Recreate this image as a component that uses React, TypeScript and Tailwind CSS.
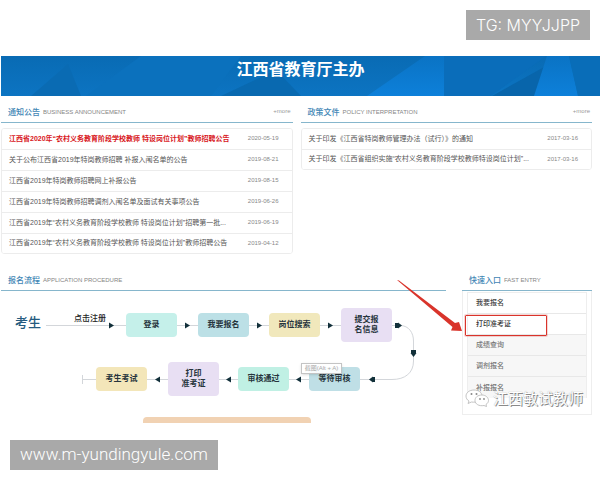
import React from 'react';

const notices = [
  { title: '江西省2020年“农村义务教育阶段学校教师 特设岗位计划”教师招聘公告', date: '2020-05-19', hot: true },
  { title: '关于公布江西省2019年特岗教师招聘 补报入闱名单的公告', date: '2019-08-21' },
  { title: '江西省2019年特岗教师招聘网上补报公告', date: '2019-08-15' },
  { title: '江西省2019年特岗教师招聘调剂入闱名单及面试有关事项公告', date: '2019-06-26' },
  { title: '江西省2019年“农村义务教育阶段学校教师 特设岗位计划”招聘第一批...', date: '2019-06-19' },
  { title: '江西省2019年“农村义务教育阶段学校教师 特设岗位计划”教师招聘公告', date: '2019-04-12' },
];

const policies = [
  { title: '关于印发《江西省特岗教师管理办法（试行）》的通知', date: '2017-03-16' },
  { title: '关于印发《江西省组织实施“农村义务教育阶段学校教师特设岗位计划”...', date: '2017-03-16' },
];

const steps = [
  { lines: ['登录'], place: 'left-[125px] top-[22px] h-6 bg-[#c5f0ea]' },
  { lines: ['我要报名'], place: 'left-[197px] top-[22px] h-6 bg-[#bce0e6]' },
  { lines: ['岗位搜索'], place: 'left-[268px] top-[22px] h-6 bg-[#f1e8bc]' },
  { lines: ['提交报', '名信息'], place: 'left-[340px] top-[17px] h-[34px] bg-[#e8dff3]' },
  { lines: ['等待审核'], place: 'left-[308px] top-[76px] h-6 bg-[#bfdfe6]' },
  { lines: ['审核通过'], place: 'left-[237px] top-[76px] h-6 bg-[#c0f0e4]' },
  { lines: ['打印', '准考证'], place: 'left-[167px] top-[71px] h-[34px] bg-[#e8dff3]' },
  { lines: ['考生考试'], place: 'left-[95px] top-[76px] h-6 bg-[#f3e6b9]' },
];

const entries = [
  { name: '我要报名', style: 'bg-white text-[#444]' },
  { name: '打印准考证', style: 'bg-white text-[#333]' },
  { name: '成绩查询', style: 'bg-[#f7f7f7] text-[#777]' },
  { name: '调剂报名', style: 'bg-[#f7f7f7] text-[#777]' },
  { name: '补报报名', style: 'bg-[#f7f7f7] text-[#777]' },
];

const SectionTitle = ({ title, english, more }: { title: string; english: string; more?: boolean }) => (
  <div className="flex items-center border-b border-[#86b6cc] pl-[7px] pr-[2px] pt-[2px] h-[22px]">
    <h2 className="text-[8px] font-medium text-[#3f86b5]">{title}</h2>
    <span className="ml-[3px] text-[6px] text-[#858585]">{english}</span>
    {more && (
      <a href="#" className="ml-auto pb-[2px] text-[6px] text-[#999]">
        +more
      </a>
    )}
  </div>
);

const NewsList = ({ items }: { items: { title: string; date: string; hot?: boolean }[] }) => (
  <ul className="mt-[5px] overflow-hidden rounded-sm border-x border-[#ececec]">
    {items.map(({ title, date, hot }) => (
      <li
        key={title}
        className="flex h-[21px] items-center justify-between border-t border-[#ececec] pl-[7px] pr-[13px] last:border-b"
      >
        <a
          href="#"
          className={`whitespace-nowrap text-[7px] ${hot ? 'font-bold text-[#d8161c]' : 'text-[#555]'}`}
        >
          {title}
        </a>
        <time className="pb-px text-[6px] text-[#888]">{date}</time>
      </li>
    ))}
  </ul>
);

const Banner = () => (
  <header className="relative ml-px flex h-10 justify-center overflow-hidden bg-[#0a6fbb]">
    <svg className="absolute inset-0 h-full w-full" viewBox="0 0 599 40" preserveAspectRatio="none" aria-hidden="true">
      <defs>
        <linearGradient id="sky" x1="0" y1="0" x2="0" y2="1">
          <stop offset="0" stopColor="#096bb4" />
          <stop offset="1" stopColor="#0c74c2" />
        </linearGradient>
        <linearGradient id="beam" x1="0" y1="0" x2="0" y2="1">
          <stop offset="0" stopColor="#0a73c4" />
          <stop offset="1" stopColor="#0d80da" />
        </linearGradient>
      </defs>
      <rect width="599" height="40" fill="url(#sky)" />
      <path d="M30 40 L67 8 L80 40 Z" fill="#0a6bb3" />
      <path d="M85 40 L140 0 L240 0 L210 40 Z" fill="#0b71bd" />
      <path d="M220 40 L275 14 L300 40 Z" fill="#0969b0" />
      <path d="M366 40 L424 0 L443 0 L443 40 Z" fill="url(#beam)" />
      <path d="M443 0 H545 L490 40 H443 Z" fill="#0a6dba" />
      <path d="M491 40 L545 10 L535 40 Z" fill="#0865ab" />
      <path d="M533 40 L546 0 H568 L577 40 Z" fill="url(#beam)" />
      <path d="M568 0 H599 V40 H577 Z" fill="#096db8" />
    </svg>
    <h1 className="relative pt-[2px] text-base font-bold text-white">江西省教育厅主办</h1>
  </header>
);

const Procedure = () => (
  <div className="relative h-[132px] overflow-hidden">
    <svg className="absolute left-0 top-0" width="446" height="132" viewBox="0 0 446 132" aria-hidden="true">
      <g fill="none" stroke="#d3d6da">
        <path d="M45 34.5 H399 C408 34.5 412.500 42 412.500 50 V70 C412.500 82 404 88.500 391 88.500 H82" />
        <path d="M81.500 84 V93" />
      </g>
      <g fill="#12303a">
        <path d="M108 31.500 L113 34.500 L108 37.500 Z" />
        <path d="M184 31.500 L189 34.500 L184 37.500 Z" />
        <path d="M256 31.500 L261 34.500 L256 37.500 Z" />
        <path d="M327 31.500 L332 34.500 L327 37.500 Z" />
        <path d="M394 32 H397 V31.500 L401 34.500 L397 37.500 V37 H394 Z" />
        <path d="M410 59 H415 V62 H415.500 L412.500 66 L409.500 62 H410 Z" />
        <path d="M374 86 H372 V85.500 L368 88.500 L372 91.500 V91 H374 Z" />
        <path d="M300 85.500 L295 88.500 L300 91.500 Z" />
        <path d="M230 85.500 L225 88.500 L230 91.500 Z" />
        <path d="M159 85.500 L154 88.500 L159 91.500 Z" />
      </g>
    </svg>
    <span className="absolute left-[14px] top-[22px] text-[13px] leading-5 font-medium text-[#245a7e]">考生</span>
    <span className="absolute left-[73px] top-[22px] text-[8px] leading-3 font-medium text-[#222]">点击注册</span>
    {steps.map(({ lines, place }) => (
      <div
        key={lines[0]}
        className={`absolute flex w-[51px] flex-col items-center justify-center rounded text-[8px] leading-[10px] font-bold text-[#26343c] ${place}`}
      >
        {lines.map((line) => (
          <span key={line}>{line}</span>
        ))}
      </div>
    ))}
    <div
      role="tooltip"
      className="absolute left-[300px] top-[72px] flex h-[11px] w-[41px] items-center justify-center whitespace-nowrap border border-[#c4c4c4] bg-white/90 text-[6px] text-[#aaa] shadow-sm"
    >
      截图(Alt + A)
    </div>
    <div className="absolute left-[142px] top-[126px] h-3 w-[168px] rounded bg-[#f1d2b3]" />
  </div>
);

const QuickEntry = () => (
  <aside className="relative w-[130px] shrink-0">
    <SectionTitle title="快速入口" english="FAST ENTRY" />
    <nav className="border border-t-0 border-[#eee] px-1 pt-px pb-4">
      <ul className="divide-y divide-[#e8e8e8] border-x border-t border-[#eee]">
        {entries.map(({ name, style }) => (
          <li key={name} className={`flex h-[21px] items-center pl-2 text-[7px] leading-[8px] font-medium ${style}`}>
            <a href="#">{name}</a>
          </li>
        ))}
      </ul>
    </nav>
    <div className="absolute left-[3px] top-[46px] h-[21px] w-[82px] rounded-[1px] border border-[#d9342b] ring-1 ring-[#d9342b]/20" />
    <svg className="absolute -left-[66px] top-[10px]" width="68" height="54" viewBox="0 0 68 54" aria-hidden="true">
      <path d="M1 1 L3 1.500 L59 44 L63 43 L66 52 L55 51.500 L56.500 48 Z" fill="#d9342b" />
    </svg>
    <div className="absolute left-[3px] top-[120px] flex items-center gap-1">
      <svg width="24" height="18" viewBox="0 0 24 18" aria-hidden="true">
        <g fill="#fff" stroke="#b5b5b5" strokeWidth="0.8">
          <path d="M9 1 C4 1 1 4 1 7 C1 9 2 11 4 12 L3 14.500 L6.500 13 C12 14 17 11 17 7 C17 3.500 13.500 1 9 1 Z" />
          <path d="M17 6 C12.500 6 10 8.500 10 11.500 C10 15 14 17.500 19 16.500 L21.500 17.500 L21 15.500 C22.500 14.500 23.500 13 23.500 11.500 C23.500 8.500 20.500 6 17 6 Z" />
        </g>
        <g fill="#888">
          <circle cx="6.500" cy="5" r="1" />
          <circle cx="11.500" cy="5" r="1" />
          <circle cx="15" cy="10" r="0.9" />
          <circle cx="19" cy="10" r="0.9" />
        </g>
      </svg>
      <span className="whitespace-nowrap text-[15px] leading-[15px] text-white [text-shadow:1px_1px_0_#8a8a8a,0_0_1px_#999]">
        江西敏试教师
      </span>
    </div>
  </aside>
);

const App = () => {
  return (
    <div className="bg-white font-['Liberation_Sans','Noto_Sans_CJK_SC',sans-serif]">
      <div className="flex h-14 justify-end pt-[10px] pr-[10px]">
        <p className="flex h-[30px] items-center bg-[#a9a9a9] px-[10px] font-['Inter',sans-serif] text-base font-light text-white">
          TG: MYYJJPP
        </p>
      </div>

      <Banner />

      <main className="pl-px pr-2">
        <div className="grid grid-cols-2 gap-2 pt-[5px]">
          <section>
            <SectionTitle title="通知公告" english="BUSINESS ANNOUNCEMENT" more />
            <NewsList items={notices} />
          </section>
          <section>
            <SectionTitle title="政策文件" english="POLICY INTERPRETATION" more />
            <NewsList items={policies} />
          </section>
        </div>

        <div className="flex gap-4 pt-[15px]">
          <section className="min-w-0 flex-1">
            <SectionTitle title="报名流程" english="APPLICATION PROCEDURE" />
            <Procedure />
          </section>
          <QuickEntry />
        </div>
      </main>

      <footer className="flex pt-[17px] pl-[10px]">
        <a
          href="#"
          className="flex h-[30px] items-center bg-[#a9a9a9] px-[10px] font-['Roboto',sans-serif] text-[17px] font-light text-white"
        >
          www.m-yundingyule.com
        </a>
      </footer>
    </div>
  );
};

export default App;
